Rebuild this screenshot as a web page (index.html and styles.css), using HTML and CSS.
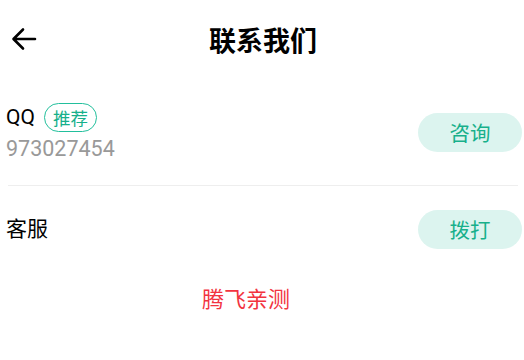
FILE: index.html
```html
<!DOCTYPE html>
<html lang="zh">
<head>
<meta charset="utf-8">
<link rel="stylesheet" href="styles.css">
</head>
<body>
<header class="bar">
  <div class="back">
    <svg width="26" height="24" viewBox="0 0 26 24"><path d="M24 12H3 M12 2.5L2.5 12L12 21.5" fill="none" stroke="#000" stroke-width="2.6" stroke-linecap="round" stroke-linejoin="round"/></svg>
  </div>
  <h1 class="title">联系我们</h1>
  <div class="spacer"></div>
</header>
<section class="list">
  <div class="row row-qq">
    <div class="info">
      <div class="name-line"><span class="name">QQ</span><span class="badge">推荐</span></div>
      <div class="num">973027454</div>
    </div>
    <button class="btn">咨询</button>
  </div>
  <div class="divider"></div>
  <div class="row row-kf">
    <div class="info"><span class="name">客服</span></div>
    <button class="btn">拨打</button>
  </div>
</section>
<p class="foot">腾飞亲测</p>
</body>
</html>
```

FILE: styles.css
```css
* { box-sizing: border-box; }
body {
  margin: 0;
  background: #fff;
  font-family: Roboto, "Noto Sans CJK SC", sans-serif;
  color: #000;
  width: 524px;
}
.bar {
  height: 78px;
  display: grid;
  grid-template-columns: 60px 1fr 60px;
  align-items: center;
}
.back { padding-left: 11px; display: flex; align-items: center; }
.back svg { display: block; }
.title {
  margin: 0;
  text-align: center;
  font-family: "Noto Sans CJK SC", sans-serif;
  font-weight: 700;
  font-size: 27px;
  line-height: 1;
  padding-left: 2px;
}
.list { padding-top: 2px; }
.row {
  display: flex;
  align-items: center;
  justify-content: space-between;
  padding: 0 2px 0 6px;
}
.row-qq { height: 105px; }
.row-kf { height: 86px; }
.info { display: flex; flex-direction: column; }
.name-line { display: flex; align-items: center; height: 30px; gap: 9px; }
.name { font-size: 21px; line-height: 30px; font-family: Roboto, "Noto Sans CJK SC", sans-serif; }
.badge {
  font-family: "Noto Sans CJK SC", sans-serif;
  font-size: 17.5px;
  line-height: 27px;
  height: 29px;
  padding: 0 8px;
  border: 1px solid #22bf9c;
  border-radius: 15px;
  color: #17b08b;
}
.num {
  font-size: 21.5px;
  line-height: 28px;
  color: #999;
  margin-top: 3px;
}
.btn {
  width: 104px;
  height: 39px;
  border: 0;
  border-radius: 20px;
  background: #dcf4ef;
  color: #17b08b;
  font-family: "Noto Sans CJK SC", sans-serif;
  font-size: 20.5px;
  padding: 0;
  line-height: 39px;
}
.divider {
  height: 1px;
  background: #eeeeee;
  margin: 0 6px 0 8px;
}
.foot {
  margin: 0;
  padding-top: 11px;
  padding-right: 32px;
  text-align: center;
  font-family: "Noto Sans CJK SC", sans-serif;
  font-size: 22px;
  line-height: 28px;
  color: #f2343f;
}
```
